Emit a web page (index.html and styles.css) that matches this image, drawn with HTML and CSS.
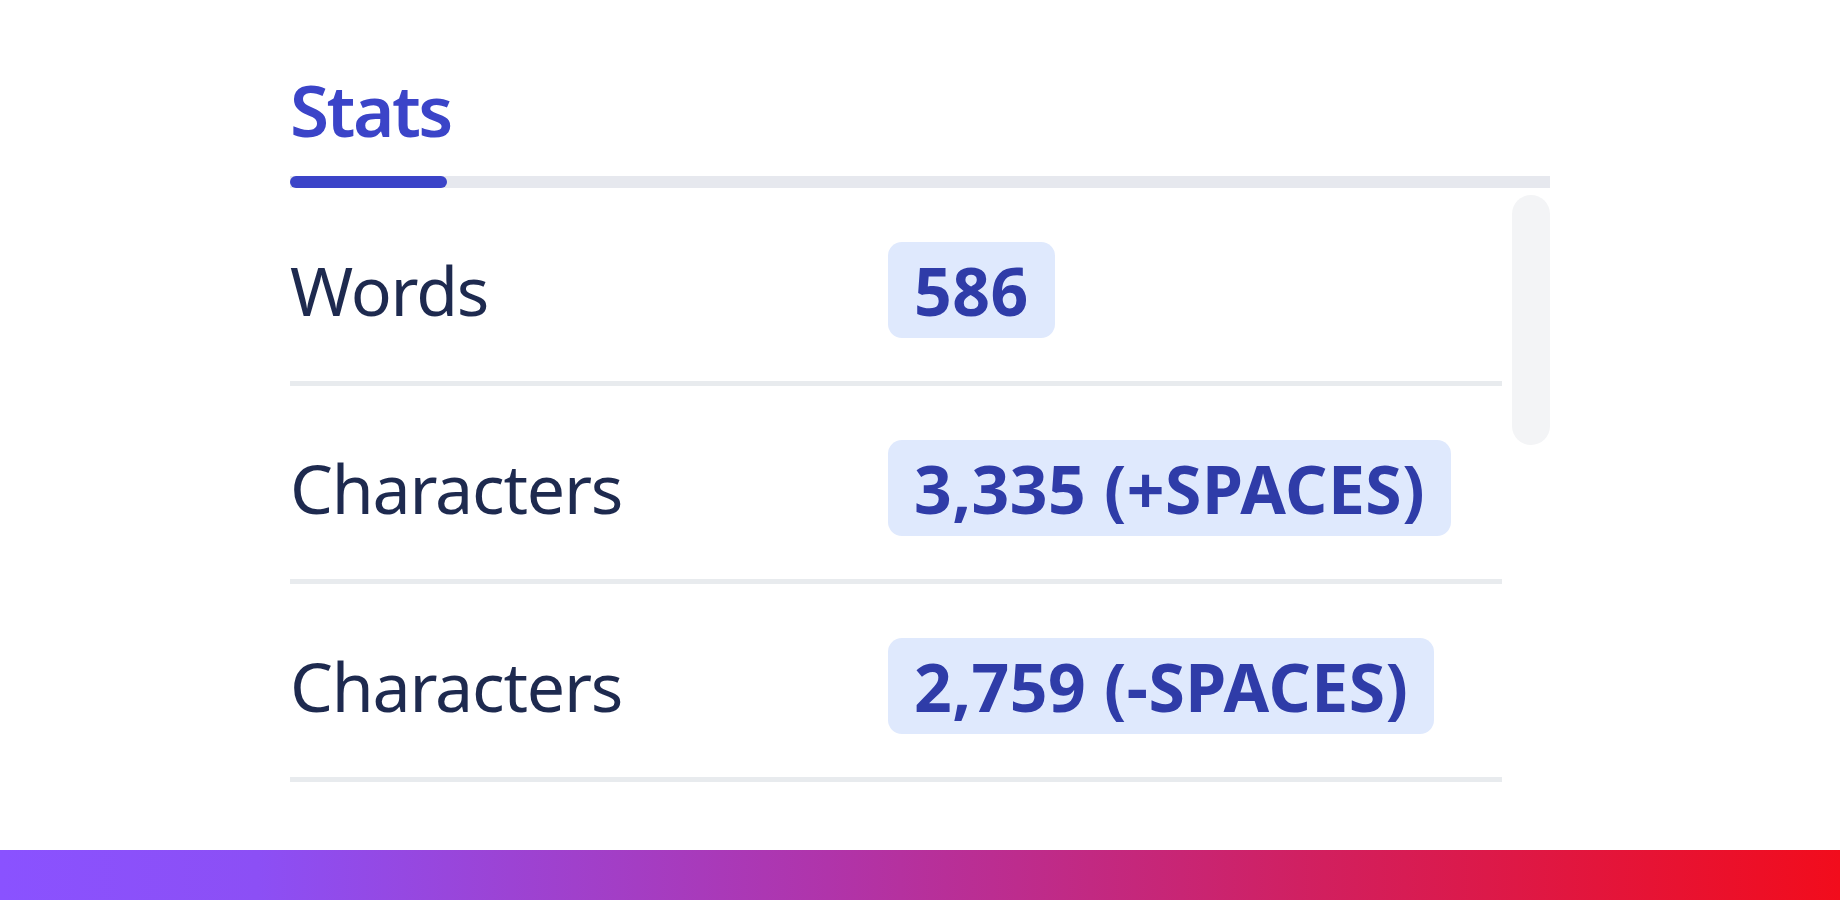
FILE: index.html
```html
<!DOCTYPE html>
<html>
<head>
    <meta charset="UTF-8">
    <title>Stats</title>
    <link rel="stylesheet" href="styles.css">
</head>
<body>
<div class="page">
    <div class="panel">
        <div class="tabs">
            <a href="javascript:;" class="tab active">Stats</a>
        </div>
        <div class="body">
            <ul class="list">
                <li class="row">
                    <span class="label">Words</span>
                    <span class="value"><em>586</em></span>
                </li>
                <li class="row">
                    <span class="label">Characters</span>
                    <span class="value"><em>3,335 (+SPACES)</em></span>
                </li>
                <li class="row">
                    <span class="label">Characters</span>
                    <span class="value"><em>2,759 (-SPACES)</em></span>
                </li>
            </ul>
            <div class="scroll">
                <div class="thumb"></div>
            </div>
        </div>
    </div>
</div>
<div class="bar"></div>
</body>
</html>
```

FILE: styles.css
```css
body, div, ul, li, a, span, em {
    margin: 0;
    padding: 0;
}

ul, li {
    list-style: none;
}

em {
    font-style: normal;
}

a {
    text-decoration: none;
}

html, body {
    height: 100%;
}

body {
    display: flex;
    flex-direction: column;
    background: #fff;
    font-family: "Noto Sans", "Open Sans", sans-serif;
}

.page {
    flex: 1;
    overflow: hidden;
}

/*面板*/
.panel {
    margin-left: 290px;
    width: 1260px;
}

.tabs {
    display: flex;
    padding-top: 62px;
    border-bottom: 12px solid #e6e8ee;
}

.tab {
    position: relative;
    display: block;
    width: 157px;
    padding-bottom: 18px;
    color: #3b44c8;
    font-size: 71px;
    font-weight: 600;
    line-height: 96px;
    letter-spacing: -2.5px;
}

.tab.active:after {
    content: "";
    position: absolute;
    left: 0;
    bottom: -12px;
    width: 100%;
    height: 12px;
    border-radius: 6px;
    background: #3b44c8;
}

.body {
    display: flex;
    gap: 10px;
}

/*列表*/
.list {
    width: 1212px;
}

.row {
    display: grid;
    grid-template-columns: 598px 1fr;
    align-items: center;
    padding: 54px 0 43px;
    border-bottom: 5px solid #e8ebee;
}

.label {
    color: #1e2a4f;
    font-size: 68px;
    font-weight: 400;
    line-height: 96px;
    letter-spacing: -1.2px;
}

.value em {
    display: inline-block;
    padding: 0 26px;
    height: 96px;
    border-radius: 14px;
    background: #dfe9fd;
    color: #2f3ca8;
    font-size: 66px;
    font-weight: 700;
    line-height: 96px;
    letter-spacing: 0.5px;
}

/*滚动条*/
.scroll {
    width: 38px;
    padding-top: 7px;
}

.scroll .thumb {
    height: 250px;
    border-radius: 19px;
    background: #f3f4f6;
}

.bar {
    height: 50px;
    background: linear-gradient(to right, #8a52ff 0%, #8c4ff5 14%, #b034aa 45%, #d21f5e 72%, #f20c1c 100%);
}
```
